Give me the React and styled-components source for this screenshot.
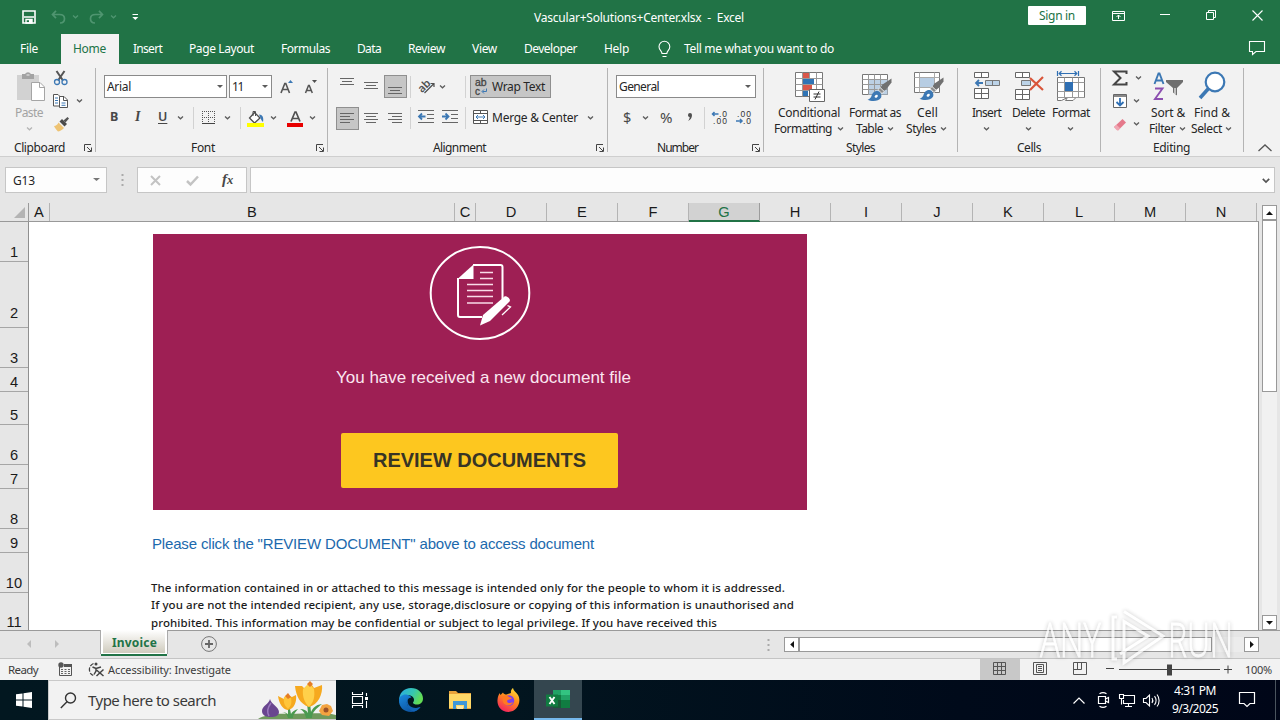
import React, { useLayoutEffect, useRef } from "react";
import styled, { createGlobalStyle, css } from "styled-components";

const UI = `"Noto Sans", "Open Sans", sans-serif`;
const ARIAL = `"Liberation Sans", Arial, sans-serif`;

const Global = createGlobalStyle`
  * { box-sizing: border-box; }
  body { margin: 0; font-family: ${UI}; font-size: 12px; color: #262626; overflow: hidden; }
  svg { display: block; flex: none; overflow: visible; }
`;

/* ---------- text ---------- */
const LabelText = styled.span`
  flex: none;
  display: block;
  width: ${(p) => p.$w}px;
  margin-left: ${(p) => p.$ml || 0}px;
  margin-top: ${(p) => p.$mt || 0}px;
  white-space: pre;
  font-family: ${(p) => p.$font || UI};
  font-size: ${(p) => p.$size || 12}px;
  font-weight: ${(p) => p.$weight || 400};
  line-height: ${(p) => p.$lh || 16}px;
  color: ${(p) => p.$color || "inherit"};
`;

/* Label tracks its letters so that the string fills the width it is given. */
function Label({ w, ml, mt, size, weight, color, font, lh, children }) {
  const ref = useRef(null);
  useLayoutEffect(() => {
    const el = ref.current;
    el.style.letterSpacing = "0px";
    const range = document.createRange();
    range.selectNodeContents(el);
    const natural = range.getBoundingClientRect().width;
    el.style.letterSpacing = (w - natural) / Math.max(1, el.textContent.length) + "px";
  }, [w, children]);
  return (
    <LabelText ref={ref} $w={w} $ml={ml} $mt={mt} $size={size} $weight={weight} $color={color} $font={font} $lh={lh}>
      {children}
    </LabelText>
  );
}

/* ---------- shared parts ---------- */
const Icon = styled.svg.attrs({ fill: "none" })`
  width: ${(p) => p.$w}px;
  height: ${(p) => p.$h}px;
  margin-left: ${(p) => p.$ml || 0}px;
  margin-top: ${(p) => p.$mt || 0}px;
`;
const Row = styled.div`
  display: flex;
  align-items: center;
  flex: none;
  height: ${(p) => p.$h}px;
  margin-top: ${(p) => p.$mt || 0}px;
`;
const Column = styled.div`
  display: flex;
  flex-direction: column;
  flex: none;
  width: ${(p) => p.$w}px;
  margin-left: ${(p) => p.$ml || 0}px;
`;
const Chev = ({ ml, mt, c = "#5c5c5c" }) => (
  <Icon $w={7} $h={4} $ml={ml} $mt={mt} viewBox="0 0 7 4">
    <path d="M1 .6 3.5 2.800 6 .6" stroke={c} strokeWidth="1.300" />
  </Icon>
);
const Divider = styled.div`
  flex: none;
  width: 1px;
  height: ${(p) => p.$h || 22}px;
  margin-left: ${(p) => p.$ml || 0}px;
  background: #d2d2d2;
`;

const Screen = styled.div`
  position: relative;
  width: 1280px;
  height: 720px;
  display: flex;
  flex-direction: column;
  overflow: hidden;
  background: #e6e6e6;
`;

/* ---------- title bar and tabs ---------- */
const TitleBar = styled.header`
  display: flex;
  align-items: center;
  height: 34px;
  flex: none;
  background: #217346;
  color: #fff;
`;
const SignIn = styled.button`
  width: 58px;
  height: 19px;
  margin: -3px 0 0 284px;
  padding: 0 0 0 11px;
  border: 0;
  border-radius: 1px;
  background: #fff;
  color: #217346;
  text-align: left;
`;
const TabBar = styled.nav`
  display: flex;
  align-items: center;
  height: 30px;
  flex: none;
  background: #217346;
  color: #fff;
`;
const ActiveTab = styled.div`
  display: flex;
  align-items: center;
  width: 58px;
  height: 30px;
  margin-left: 23px;
  padding-left: 12px;
  background: #f3f2f2;
  color: #217346;
`;

/* ---------- ribbon ---------- */
const Ribbon = styled.section`
  display: flex;
  height: 93px;
  flex: none;
  background: #f2f2f2;
  border-bottom: 1px solid #cfcfcf;
`;
const Group = styled.div`
  display: flex;
  flex-direction: column;
  width: ${(p) => p.$w}px;
  height: 92px;
  flex: none;
  background: linear-gradient(#b4b4b4, #b4b4b4) right 4px / 1px 84px no-repeat;
`;
const GroupBody = styled.div`
  display: flex;
  height: 76px;
  flex: none;
`;
const GroupFoot = styled.div`
  display: flex;
  align-items: center;
  height: 16px;
`;
const Stack = styled.div`
  display: flex;
  flex-direction: column;
`;
const Combo = styled.div`
  display: flex;
  align-items: center;
  flex: none;
  width: ${(p) => p.$w}px;
  height: 23px;
  margin-left: ${(p) => p.$ml}px;
  padding-left: 2px;
  border: 1px solid #8a8a8a;
  background: #fff;
`;
const Pressed = styled.div`
  display: flex;
  align-items: center;
  flex: none;
  width: ${(p) => p.$w}px;
  height: 23px;
  margin-left: ${(p) => p.$ml}px;
  padding-left: ${(p) => p.$pl || 3}px;
  border: 1px solid #8f8f8f;
  background: #c6c6c6;
`;
const Glyph = styled.span`
  flex: none;
  width: ${(p) => p.$w}px;
  margin-left: ${(p) => p.$ml}px;
  margin-top: ${(p) => p.$mt || 0}px;
  font-size: ${(p) => p.$size || 14}px;
  line-height: 18px;
  font-weight: ${(p) => p.$weight || 400};
  color: #484848;
  ${(p) => p.$italic && css`font-family: "Liberation Serif", serif; font-style: italic;`}
  ${(p) => p.$under && css`text-decoration: underline; text-underline-offset: 2px;`}
`;
const Arrow = ({ ml, mt, c = "#5c5c5c", w = 6 }) => (
  <Icon $w={w} $h={3} $ml={ml} $mt={mt} viewBox="0 0 6 3" preserveAspectRatio="none"><path d="M0 0H6L3 3Z" fill={c} /></Icon>
);
const Launcher = ({ ml }) => (
  <Icon $w={9} $h={9} $ml={ml} viewBox="0 0 9 9">
    <path d="M.5 7V.5H7M3 3l4 4M7.5 3.5v4h-4" stroke="#444" />
  </Icon>
);
const Lines = ({ ml, rows, mt }) => (
  <Icon $w={16} $h={16} $ml={ml} $mt={mt} viewBox="0 0 16 16">
    {rows.map(([y, a, b]) => <path key={y} d={`M${a} ${y + 0.5}H${b}`} stroke="#666" />)}
  </Icon>
);
const BigButton = styled.div`
  display: flex;
  flex-direction: column;
  flex: none;
  width: ${(p) => p.$w}px;
  margin-left: ${(p) => p.$ml || 0}px;
  padding-top: 6px;
`;
const IconBox = styled.div`
  height: 35px;
  flex: none;
`;
const Brush = () => (
  <>
    <path d="M30.500 7.500v4L25.500 18l-2.500 2-3.500-3.500 2-3Z" fill="#707070" />
    <path d="M19 16.500l4.300 4-2.300 2-4-3.800Z" fill="#8d8d8d" stroke="#f2f2f2" strokeWidth=".8" />
    <path d="M16.500 20c-3.500-.2-5.200 2.500-6 5-.6 1.800-2 3.200-4 3.800 4.500 2 11 1.700 13.500-2 1.300-2.300-.5-6.500-3.500-6.800Z" fill="#3c78b4" />
    <path d="M13.500 26c.5-2 2-2.800 3-2 .8.800.2 2.300-1.500 3Z" fill="#fff" />
  </>
);

function ClipboardGroup() {
  return (
    <Group $w={96}>
      <GroupBody>
        <BigButton $w={36} $ml={15}>
          <Icon $w={30} $h={33} $ml={1} viewBox="0 0 30 33">
            <path d="M1 5h22v25H1z" fill="#d2d2d2" />
            <path d="M6 4h3a3.500 3.500 0 0 1 6 0h3v5H6Z" fill="#a3a3a3" />
            <path d="M10.500 5h3" stroke="#eee" />
            <path d="M15.500 12.500H24L28.500 17v13.500h-13z" fill="#fff" stroke="#a5a5a5" />
            <path d="M23.500 12.500v5h5" stroke="#a5a5a5" />
          </Icon>
          <Label w={28} mt={2} color="#a3a3a3">Paste</Label>
          <Chev ml={11} mt={6} c="#b5b5b5" />
        </BigButton>
        <Column $w={40}>
          <Row $h={22} $mt={3}>
            <Icon $w={16} $h={16} $ml={2} viewBox="0 0 16 16">
              <path d="M3.500 1l6.500 9.500M11.500 1 5 10.500" stroke="#555" strokeWidth="2" />
              <circle cx="4" cy="12" r="2.500" stroke="#3c78b4" strokeWidth="1.300" />
              <circle cx="11.500" cy="12" r="2.500" stroke="#3c78b4" strokeWidth="1.300" />
            </Icon>
          </Row>
          <Row $h={24}>
            <Icon $w={16} $h={16} $ml={2} viewBox="0 0 16 16">
              <path d="M.5 1.500H5L7.500 4v9h-7z" fill="#fff" stroke="#555" />
              <path d="M6.500 3.500H11L14.500 7v7.500h-8z" fill="#fff" stroke="#555" />
              <path d="M10.500 3.500v4h4" stroke="#555" />
              <path d="M2 5h3M2 7.500h3M2 10h3M8.500 10h4M8.500 12.300h4" stroke="#3c78b4" />
            </Icon>
            <Chev ml={7} />
          </Row>
          <Row $h={22}>
            <Icon $w={17} $h={16} $ml={2} viewBox="0 0 17 16">
              <path d="M10.500 4.500 14.500 1 16 2.500l-3.500 4Z" fill="#555" />
              <path d="M6.500 5.500 9 3l5 5-2.500 2.500Z" fill="#4a4a4a" />
              <path d="M5.500 6.500 11 12c-2 2-4.500 3.500-6 3.500C3.500 14 1.500 11.500 1 10c2 0 3.500-1.500 4.500-3.500Z" fill="#eec373" />
            </Icon>
          </Row>
        </Column>
      </GroupBody>
      <GroupFoot><Label w={51} ml={14}>Clipboard</Label><Launcher ml={19} /></GroupFoot>
    </Group>
  );
}

function FontGroup() {
  return (
    <Group $w={232}>
      <GroupBody>
        <Stack>
          <Row $h={23} $mt={11}>
            <Combo $w={123} $ml={8}><Label w={24}>Arial</Label><Arrow ml={86} mt={-1} /></Combo>
            <Combo $w={43} $ml={2}><Label w={11}>11</Label><Arrow ml={19} mt={-1} /></Combo>
            <Icon $w={14} $h={16} $ml={8} viewBox="0 0 14 16">
              <path d="M1 14 4.800 4.500h1L9.500 14M2.500 10.500h5.500" stroke="#555" strokeWidth="1.600" />
              <path d="M8 4l2.500-3L13 4Z" fill="#3c78b4" />
            </Icon>
            <Icon $w={14} $h={16} $ml={10} viewBox="0 0 14 16">
              <path d="M1.500 14 4.500 6.500h.8L8.300 14M2.500 11.500h5" stroke="#555" strokeWidth="1.500" />
              <path d="M8 1h5l-2.500 3Z" fill="#505050" />
            </Icon>
          </Row>
          <Row $h={24} $mt={8}>
            <Glyph $w={9} $ml={14} $mt={-2} $weight={700} $size={12.5}>B</Glyph>
            <Glyph $w={8} $ml={16} $mt={-2} $size={14} $italic $weight={700}>I</Glyph>
            <Glyph $w={9} $ml={15} $mt={-2} $weight={600} $size={12.5} $under>U</Glyph>
            <Chev ml={10} />
            <Divider $ml={9} />
            <Icon $w={14} $h={14} $ml={8} viewBox="0 0 14 14">
              <path d="M.5 0v13M6.500 0v13M12.500 0v13M0 .5h13M0 6.500h13" stroke="#555" strokeDasharray="1 1" />
              <path d="M0 12.500h13" stroke="#444" />
            </Icon>
            <Chev ml={8} />
            <Divider $ml={9} />
            <Icon $w={18} $h={17} $ml={6} viewBox="0 0 18 17">
              <path d="M7.500 2.500 13 8l-5.500 5L2.500 8Z" fill="#fff" stroke="#505050" strokeWidth="1.300" />
              <path d="M6 6V1.500h2.500V6" stroke="#505050" />
              <path d="M12 4.500c3.500 0 5 3 4 7.500-1.500-1-2-3-2.500-4Z" fill="#3c78b4" />
              <path d="M0 13h17v4H0z" fill="#ffff00" />
            </Icon>
            <Chev ml={5} />
            <Icon $w={17} $h={17} $ml={10} viewBox="0 0 17 17">
              <path d="M4 11.500 8 2h1l4 9.500M5.500 8.500h6" stroke="#505050" strokeWidth="1.700" />
              <path d="M0 13h16v4H0z" fill="#e80000" />
            </Icon>
            <Chev ml={5} />
          </Row>
        </Stack>
      </GroupBody>
      <GroupFoot><Label w={24} ml={95}>Font</Label><Launcher ml={101} /></GroupFoot>
    </Group>
  );
}

function AlignmentGroup() {
  return (
    <Group $w={280}>
      <GroupBody>
        <Stack>
          <Row $h={23} $mt={11}>
            <Lines ml={12} rows={[[0, 0, 14], [3, 2, 12], [6, 0, 14]]} mt={-1} />
            <Lines ml={8} rows={[[3, 0, 14], [6, 2, 12], [9, 0, 14]]} mt={1} />
            <Pressed $w={23} $ml={4}><Lines ml={0} rows={[[9, 0, 14], [12, 2, 12], [15, 0, 14]]} mt={-2} /></Pressed>
            <Divider $ml={3} />
            <Icon $w={18} $h={17} $ml={7} viewBox="0 0 18 17">
              <text x="0" y="12" transform="rotate(-45 6 9)" fontSize="11" fontFamily="Noto Sans" fontWeight="600" fill="#505050">ab</text>
              <path d="M6.500 15 16 5.500M12.500 5.500H16V9" stroke="#505050" strokeWidth="1.200" />
            </Icon>
            <Chev ml={3} />
            <Divider $ml={19} />
            <Pressed $w={81} $ml={4} $pl={4}>
              <Icon $w={14} $h={18} viewBox="0 0 14 18">
                <text x="0" y="8" fontSize="10.500" fontFamily="Liberation Sans" fontWeight="400" stroke="#444" strokeWidth=".3" fill="#444">ab</text>
                <text x="0" y="16.500" fontSize="10" fontFamily="Liberation Sans" stroke="#444" strokeWidth=".3" fill="#444">c</text>
                <path d="M11.500 10.500v3H7.500M9 11.500 7 13.500l2 2" stroke="#3c78b4" />
              </Icon>
              <Label w={53} ml={3}>Wrap Text</Label>
            </Pressed>
          </Row>
          <Row $h={24} $mt={8}>
            <Pressed $w={23} $ml={8}><Lines ml={0} rows={[[3, 0, 14], [6, 0, 10], [9, 0, 14], [12, 0, 10]]} /></Pressed>
            <Lines ml={5} rows={[[3, 0, 14], [6, 2, 12], [9, 0, 14], [12, 2, 12]]} mt={-1} />
            <Lines ml={8} rows={[[3, 0, 14], [6, 4, 14], [9, 0, 14], [12, 4, 14]]} mt={-1} />
            <Divider $ml={6} />
            <Icon $w={16} $h={14} $ml={7} $mt={-2} viewBox="0 0 16 14">
              <path d="M0 .5h16M9 4.500h7M9 8.500h7M0 12.500h16" stroke="#666" />
              <path d="M7.500 6.500H1M4 3.500l-3 3 3 3" stroke="#3c78b4" strokeWidth="1.800" />
            </Icon>
            <Icon $w={16} $h={14} $ml={8} $mt={-2} viewBox="0 0 16 14">
              <path d="M0 .5h16M9 4.500h7M9 8.500h7M0 12.500h16" stroke="#666" />
              <path d="M0 6.500h6.500M3.500 3.500l3 3-3 3" stroke="#3c78b4" strokeWidth="1.800" />
            </Icon>
            <Divider $ml={7} />
            <Icon $w={16} $h={16} $ml={7} $mt={-2} viewBox="0 0 16 16">
              <path d="M.5 1.500h14v13H.5zM.5 4.500h14M.5 11.500h14M7.500 1.500v3M7.500 11.500v3" fill="#fff" stroke="#555" />
              <path d="M3 8h9M5 6 3 8l2 2M10 6l2 2-2 2" stroke="#3c78b4" />
            </Icon>
            <Label w={86} ml={3}>Merge &amp; Center</Label>
            <Chev ml={9} />
          </Row>
        </Stack>
      </GroupBody>
      <GroupFoot><Label w={53} ml={105}>Alignment</Label><Launcher ml={110} /></GroupFoot>
    </Group>
  );
}

const Decimals = ({ ml, flip }) => (
  <Icon $w={15} $h={15} $ml={ml} $mt={-2} viewBox="0 0 15 15">
    <text x={flip ? 1 : 7} y="6.500" fontSize="8.500" textLength={flip ? 14 : 8} fontFamily="Liberation Sans" fill="#333">{flip ? ".00" : ".0"}</text>
    <text x={flip ? 7 : 1} y="14" fontSize="8.500" textLength={flip ? 8 : 14} fontFamily="Liberation Sans" fill="#333">{flip ? ".0" : ".00"}</text>
    {flip
      ? <path d="M0 11h6M4 9l2 2-2 2" stroke="#3c78b4" strokeWidth="1.500" />
      : <path d="M6.500 4h-6M2.500 2l-2 2 2 2" stroke="#3c78b4" strokeWidth="1.500" />}
  </Icon>
);

function NumberGroup() {
  return (
    <Group $w={156}>
      <GroupBody>
        <Stack>
          <Row $h={23} $mt={11}>
            <Combo $w={140} $ml={8}><Label w={40}>General</Label><Arrow ml={86} mt={-1} /></Combo>
          </Row>
          <Row $h={24} $mt={8}>
            <Glyph $w={10} $ml={15} $mt={-3} $size={14.5}>$</Glyph>
            <Chev ml={9} />
            <Glyph $w={14} $ml={11} $mt={-2} $size={15}>%</Glyph>
            <Icon $w={6} $h={9} $ml={13} $mt={-2} viewBox="0 0 6 9"><path d="M1 2a2 2 0 1 1 4 0c0 3-1.500 5-4 6 1.200-1.500 1.800-3 1.600-4C1.500 4 1 3 1 2Z" fill="#505050" /></Icon>
            <Divider $ml={11} />
            <Decimals ml={7} />
            <Decimals ml={9} flip />
          </Row>
        </Stack>
      </GroupBody>
      <GroupFoot><Label w={41} ml={49}>Number</Label><Launcher ml={54} /></GroupFoot>
    </Group>
  );
}

function StylesGroup() {
  return (
    <Group $w={194}>
      <GroupBody>
        <BigButton $w={75} $ml={10}>
          <IconBox>
            <Icon $w={31} $h={32} $ml={21} viewBox="0 0 31 32">
              <path d="M.5 2.500h27v24H.5z" fill="#fff" stroke="#777" />
              <path d="M.5 8.500h27M.5 14.500h27M.5 20.500h27M7.500 2.500v24M14.500 2.500v24M21.500 2.500v24" stroke="#999" />
              <path d="M8 3h6v5H8zM8 15h9v5H8z" fill="#d9574a" />
              <path d="M8 9h11v5H8zM8 21h5v5H8z" fill="#2f74b5" />
              <path d="M14.500 19.500h15v12h-15z" fill="#fff" stroke="#666" />
              <path d="M18.500 24h7M18.500 27h7M24 21.500l-4 8" stroke="#333" />
            </Icon>
          </IconBox>
          <Label w={62} ml={4}>Conditional</Label>
          <Row $h={16}><Label w={58}>Formatting</Label><Chev ml={5} mt={-1} /></Row>
        </BigButton>
        <BigButton $w={52}>
          <IconBox>
            <Icon $w={32} $h={32} $ml={12} $mt={1} viewBox="0 0 32 32">
              <path d="M1.500 3.500h25v20h-25z" fill="#fff" stroke="#777" />
              <path d="M7 8.500h19.500v15H7z" fill="#bcd0e4" />
              <path d="M1.500 8.500h25M1.500 13.500h25M1.500 18.500h25M7.500 3.500v20M13.500 3.500v20M19.500 3.500v20" stroke="#999" />
              <Brush />
            </Icon>
          </IconBox>
          <Label w={52}>Format as</Label>
          <Row $h={16}><Label w={27} ml={7}>Table</Label><Chev ml={4} mt={-1} /></Row>
        </BigButton>
        <BigButton $w={50} $ml={5}>
          <IconBox>
            <Icon $w={32} $h={32} $ml={7} viewBox="0 0 32 32">
              <path d="M1.500 2.500h25v20h-25z" fill="#fff" stroke="#777" />
              <path d="M1.500 7.500h25M1.500 17.500h25M6.500 2.500v20M21.500 2.500v20" stroke="#aaa" />
              <path d="M7 8h14v9H7z" fill="#b7cde3" />
              <Brush />
            </Icon>
          </IconBox>
          <Label w={21} ml={11}>Cell</Label>
          <Row $h={16}><Label w={30}>Styles</Label><Chev ml={4} mt={-1} /></Row>
        </BigButton>
      </GroupBody>
      <GroupFoot><Label w={29} ml={82}>Styles</Label></GroupFoot>
    </Group>
  );
}

function CellsGroup() {
  return (
    <Group $w={143}>
      <GroupBody>
        <BigButton $w={40} $ml={14}>
          <IconBox>
            <Icon $w={28} $h={32} $ml={2} $mt={1} viewBox="0 0 28 32">
              <path d="M.5 1.500h14v5H.5zM7.500 1.500v5M.5 17.500h14v10H.5zM7.500 17.500v10M.5 22.500h14" fill="#fff" stroke="#666" />
              <path d="M11.500 9.500h14v5h-14zM18.500 9.500v5" fill="#bcd3e8" stroke="#777" />
              <path d="M9 12H2M5 9l-3 3 3 3" stroke="#3c78b4" strokeWidth="1.800" />
            </Icon>
          </IconBox>
          <Label w={29}>Insert</Label>
          <Chev ml={11} mt={6} />
        </BigButton>
        <BigButton $w={40}>
          <IconBox>
            <Icon $w={31} $h={32} $ml={2} $mt={1} viewBox="0 0 31 32">
              <path d="M1.500 1.500h14v5h-14zM8.500 1.500v5M1.500 18.500h14v10h-14zM8.500 18.500v10M1.500 23.500h14" fill="#fff" stroke="#666" />
              <path d="M7.500 9.500h9v5h-9z" fill="#bcd3e8" stroke="#777" />
              <path d="M16 7l13 12M29 6 16 19" stroke="#d9553a" strokeWidth="2.200" />
            </Icon>
          </IconBox>
          <Label w={33}>Delete</Label>
          <Chev ml={13} mt={6} />
        </BigButton>
        <BigButton $w={40}>
          <IconBox>
            <Icon $w={30} $h={32} $ml={4} viewBox="0 0 30 32">
              <path d="M1.500 7.500h27v20H20l-3 3h-6l-1.500 0 2-3-6 3h-4z" fill="#fff" stroke="#777" />
              <path d="M1.500 12.500h27M1.500 21.500h27M8.500 7.500v20M16.500 7.500v20M22.500 7.500v20M1.500 27.500h27" stroke="#999" />
              <path d="M9 12h8v9H9z" fill="#2f6fb3" />
              <path d="M1.500 1v5M22.500 1v5M3 3.500h18M5.500 1.300 3.200 3.500l2.300 2.200M18.500 1.300l2.300 2.200-2.300 2.200" stroke="#2f6fb3" strokeWidth="1.200" />
            </Icon>
          </IconBox>
          <Label w={38}>Format</Label>
          <Chev ml={15} mt={6} />
        </BigButton>
      </GroupBody>
      <GroupFoot><Label w={24} ml={59}>Cells</Label></GroupFoot>
    </Group>
  );
}

function EditingGroup() {
  return (
    <Group $w={143}>
      <GroupBody>
        <Column $w={48}>
          <Row $h={22} $mt={3}>
            <Icon $w={16} $h={16} $ml={11} viewBox="0 0 16 16">
              <path d="M14.500 4V1.500H2L8.500 8 2 14.500h12.500V12" stroke="#444" strokeWidth="2" />
            </Icon>
            <Chev ml={7} />
          </Row>
          <Row $h={24}>
            <Icon $w={15} $h={16} $ml={12} viewBox="0 0 15 16">
              <path d="M.5 1.500h13v13H.5z" fill="#fff" stroke="#666" />
              <path d="M1 2h12v2H1z" fill="#888" />
              <path d="M7 5v7.500M3.500 9 7 12.500 10.500 9" stroke="#2f6fb3" strokeWidth="1.800" />
            </Icon>
            <Chev ml={5} />
          </Row>
          <Row $h={22}>
            <Icon $w={15} $h={15} $ml={12} viewBox="0 0 15 15">
              <path d="M1 10 9.500 2 13 5.500 5 13.500Z" fill="#e5798b" />
              <path d="M1 10 3.500 7.700 7.200 11.300 5 13.500 3.500 13Z" fill="#f0a6b2" />
            </Icon>
            <Chev ml={5} />
          </Row>
        </Column>
        <BigButton $w={42}>
          <IconBox>
            <Icon $w={32} $h={31} $ml={4} $mt={1} viewBox="0 0 32 31">
              <path d="M1.500 13 5.500 2.500h1L10.500 13M3 9.500h6" stroke="#3c78b4" strokeWidth="1.900" />
              <path d="M2 17.500h7.500L2 28h8" stroke="#8c4fb0" strokeWidth="1.900" />
              <path d="M13 9h17v2l-6 6v7.500l-4-3V17l-7-6Z" fill="#6f6f6f" />
              <path d="M22 17v6" stroke="#ddd" strokeWidth="1.500" />
            </Icon>
          </IconBox>
          <Label w={34} ml={2}>Sort &amp;</Label>
          <Row $h={16}><Label w={26}>Filter</Label><Chev ml={4} mt={-1} /></Row>
        </BigButton>
        <BigButton $w={44}>
          <IconBox>
            <Icon $w={28} $h={30} $ml={7} $mt={1} viewBox="0 0 28 30">
              <path d="M10.500 17.500 2 27" stroke="#3c78b4" strokeWidth="3.600" />
              <circle cx="17" cy="11" r="9.300" fill="#fff" stroke="#3c78b4" strokeWidth="2.200" />
            </Icon>
          </IconBox>
          <Label w={36} ml={3}>Find &amp;</Label>
          <Row $h={16}><Label w={31}>Select</Label><Chev ml={3} mt={-1} /></Row>
        </BigButton>
      </GroupBody>
      <GroupFoot><Label w={37} ml={52}>Editing</Label></GroupFoot>
    </Group>
  );
}
const RibbonEnd = styled.div`
  display: flex;
  align-items: flex-end;
  padding: 0 0 4px 14px;
`;

/* ---------- formula bar ---------- */
const FormulaBar = styled.div`
  display: flex;
  height: 46px;
  flex: none;
  padding: 10px 0 0 5px;
`;
const Field = styled.div`
  display: flex;
  align-items: center;
  flex: none;
  width: ${(p) => p.$w}px;
  height: 26px;
  margin-left: ${(p) => p.$ml || 0}px;
  background: #fdfdfd;
  border: 1px solid #c6c6c6;
`;
const Dots = ({ ml }) => (
  <Icon $w={3} $h={12} $ml={ml} viewBox="0 0 3 12"><path d="M.5 0h2v2h-2zM.5 5h2v2h-2zM.5 10h2v2h-2z" fill="#aaa" /></Icon>
);
const Grip = styled.div`
  display: flex;
  align-items: center;
  height: 26px;
`;

/* ---------- sheet ---------- */
const SheetArea = styled.main`
  display: flex;
  height: 427px;
  flex: none;
`;
const Sheet = styled.div`
  width: 1259px;
  height: 427px;
  display: flex;
  flex-direction: column;
`;
const Heads = styled.div`
  display: flex;
  height: 19px;
  flex: none;
  border-bottom: 1px solid #999;
`;
const Head = styled.div`
  display: flex;
  align-items: flex-end;
  justify-content: center;
  flex: none;
  width: ${(p) => p.$w}px;
  height: 18px;
  font: 14.67px/17px ${ARIAL};
  color: ${(p) => (p.$on ? "#217346" : "#1a1a1a")};
  background: ${(p) => (p.$on ? "#d2d2d2" : "#e6e6e6")};
  border-right: 1px solid ${(p) => (p.$on ? "#9c9c9c" : "#b4b4b4")};
  box-shadow: ${(p) => (p.$on ? "inset 0 -1px 0 #217346, 0 1px 0 #217346" : "none")};
`;
const Corner = styled.div`
  display: flex;
  align-items: flex-end;
  justify-content: flex-end;
  flex: none;
  width: 29px;
  height: 18px;
  padding: 0 3px 3px 0;
  border-right: 1px solid #999;
`;
const Grid = styled.div`
  display: flex;
  height: 408px;
  overflow: hidden;
`;
const RowHeads = styled.div`
  width: 29px;
  flex: none;
  border-right: 1px solid #8f8f8f;
`;
const RowHead = styled.div`
  display: flex;
  align-items: flex-end;
  justify-content: center;
  height: ${(p) => p.$h}px;
  padding-bottom: ${(p) => p.$pb || 0}px;
  border-bottom: 1px solid #a6a6a6;
  font: 14.67px/17px ${ARIAL};
  color: #1a1a1a;
`;
const Cells = styled.div`
  width: 1230px;
  flex: none;
  background: #fff;
  border-right: 1px solid #8f8f8f;
  overflow: hidden;
`;
const Banner = styled.div`
  display: flex;
  flex-direction: column;
  align-items: flex-start;
  width: 654px;
  height: 276px;
  margin: 12px 0 0 124px;
  background: #9e1f54;
`;
const ReviewButton = styled.div`
  display: flex;
  align-items: center;
  width: 277px;
  height: 55px;
  margin: 44px 0 0 188px;
  padding: 0 0 1px 32px;
  border-radius: 2px;
  background: #fdc71f;
`;
const Note = styled.div`
  padding-left: 122px;
  margin-top: 25px;
`;
const VScroll = styled.div`
  display: flex;
  flex-direction: column;
  width: 21px;
  height: 427px;
  padding: 2px 3px 0;
`;
const ScrollButton = styled.div`
  display: flex;
  align-items: center;
  justify-content: center;
  flex: none;
  width: 15px;
  height: 15px;
  background: #fff;
  border: 1px solid #999;
`;
const VTrack = styled.div`
  height: 396px;
  background: #f1f1f1;
`;
const VThumb = styled.div`
  width: 15px;
  height: 172px;
  background: #fff;
  border: 1px solid #999;
`;

/* ---------- bottom bars ---------- */
const SheetTabs = styled.div`
  display: flex;
  align-items: center;
  height: 29px;
  flex: none;
  border-top: 1px solid #9a9a9a;
  border-bottom: 1px solid #c4c4c4;
`;
const SheetTab = styled.div`
  display: flex;
  align-items: center;
  align-self: flex-start;
  width: 66px;
  height: 24px;
  margin: -1px 0 0 41px;
  padding: 2px 0 0 9px;
  background: linear-gradient(#fff, #cfcbbd);
  border: solid #fff;
  border-width: 0 2px 1px;
  box-shadow: 0 2px 0 #217346, -1px 0 0 #aaa, 1px 0 0 #aaa;
`;
const HTrack = styled.div`
  width: 445px;
  height: 15px;
  background: #ececec;
`;
const HThumb = styled.div`
  width: 413px;
  height: 15px;
  background: #fff;
  border: 1px solid #999;
`;
const StatusBar = styled.div`
  display: flex;
  align-items: center;
  height: 21px;
  flex: none;
  background: #f2f2f2;
  color: #3c3c3c;
`;
const ViewButton = styled.div`
  display: flex;
  align-items: center;
  justify-content: center;
  width: 40px;
  height: 21px;
  margin-left: ${(p) => p.$ml || 0}px;
  padding-bottom: 2px;
  background: ${(p) => (p.$on ? "#c8c8c8" : "transparent")};
`;
const Taskbar = styled.footer`
  display: flex;
  align-items: center;
  height: 40px;
  flex: none;
  background: linear-gradient(90deg, #021720 0%, #02151f 40%, #000a1a 75%, #000618 100%);
  color: #fff;
`;
const SearchBox = styled.div`
  display: flex;
  align-items: center;
  width: 288px;
  height: 40px;
  margin-left: 16px;
  padding-left: 11px;
  background: #f2f2f2;
  border: 1px solid #c9c9c9;
  border-right: 0;
  color: #3a3a3a;
`;
const ActiveApp = styled.div`
  display: flex;
  align-items: center;
  justify-content: center;
  width: 48px;
  height: 40px;
  margin-left: 13px;
  background: #34464f;
  border-bottom: 2px solid #76b9ed;
`;
const Clock = styled.div`
  width: 46px;
  margin-left: 13px;
`;
const DesktopEdge = styled.div`
  width: 1px;
  height: 40px;
  margin-left: 19px;
  background: #4a545e;
`;

const Watermark = styled.div`
  position: absolute;
  left: 1040px;
  top: 606px;
  width: 200px;
  height: 66px;
  display: flex;
  align-items: center;
  opacity: 0.75;
  filter: drop-shadow(0 0 2px rgba(0, 0, 0, 0.3));
`;
const MarkWord = styled.span`
  flex: none;
  width: 64px;
  margin-left: ${(p) => p.$ml || 0}px;
  font: 300 47px/50px "Open Sans", sans-serif;
  color: #fff;
  -webkit-text-stroke: 0.8px #fff;
  transform: scaleX(${(p) => p.$sx});
  transform-origin: 0 50%;
`;

const columns = [["A", 21], ["B", 405], ["C", 21], ...[..."DEFGHIJKLMN"].map((c) => [c, 71])];
const rows = [[1, 40], [2, 66, 5], [3, 40], [4, 24], [5, 33], [6, 40], [7, 24], [8, 40], [9, 24], [10, 40], [11, 40, 1]];
const tabs = [["Insert", 29, 14], ["Page Layout", 65, 27], ["Formulas", 49, 27], ["Data", 24, 27], ["Review", 37, 27], ["View", 25, 27], ["Developer", 53, 27], ["Help", 25, 27]];

export default function App() {
  return (
    <Screen>
      <Global />
      <TitleBar>
        <Icon $w={14} $h={14} $ml={22} viewBox="0 0 14 14">
          <path d="M1 1h12v12H1z" stroke="#fff" strokeWidth="1.600" />
          <path d="M2 7h10M4 9.500h6V13H4z" stroke="#fff" strokeWidth="1.400" /><path d="M7 9.500h3V13H7z" fill="#fff" />
        </Icon>
        <Icon $w={15} $h={14} $ml={15} viewBox="0 0 15 14">
          <path d="M5 .8 1.500 4.500 5 8.200M1.500 4.500h7c3 0 5 1.700 5 4.200S12 13 9 13" stroke="#4f9570" strokeWidth="1.700" />
        </Icon>
        <Chev ml={6} c="#4f9570" />
        <Icon $w={15} $h={14} $ml={10} viewBox="0 0 15 14">
          <path d="M10 .8 13.500 4.500 10 8.200M13.500 4.500h-7c-3 0-5 1.700-5 4.200S3 13 6 13" stroke="#4f9570" strokeWidth="1.700" />
        </Icon>
        <Chev ml={6} c="#4f9570" />
        <Icon $w={7} $h={7} $ml={15} viewBox="0 0 7 7"><path d="M.5.500h5.500" stroke="#fff" /><path d="M.3 3h6L3.300 6Z" fill="#fff" /></Icon>
        <Label w={210} ml={395} mt={2}>{"Vascular+Solutions+Center.xlsx  -  Excel"}</Label>
        <SignIn><Label w={36}>Sign in</Label></SignIn>
        <Icon $w={14} $h={12} $ml={26} $mt={-3} viewBox="0 0 14 12">
          <path d="M.5 1.500h12v9H.5zM.5 3.500h12M6.500 9V5M4.500 7l2-2 2 2" stroke="#fff" />
        </Icon>
        <Icon $w={10} $h={2} $ml={34} $mt={-4} viewBox="0 0 10 2"><path d="M0 .5h10" stroke="#fff" /></Icon>
        <Icon $w={11} $h={11} $ml={36} $mt={-3} viewBox="0 0 11 11">
          <path d="M.5 2.500h7v7h-7zM2.500 2.500V.5h7v7h-2" stroke="#fff" />
        </Icon>
        <Icon $w={11} $h={11} $ml={35} $mt={-3} viewBox="0 0 11 11"><path d="M.5.5l10 10M10.500.5l-10 10" stroke="#fff" strokeWidth="1.100" /></Icon>
      </TitleBar>
      <TabBar>
        <Label w={18} ml={20}>File</Label>
        <ActiveTab><Label w={33}>Home</Label></ActiveTab>
        {tabs.map(([t, w, ml]) => <Label key={t} w={w} ml={ml}>{t}</Label>)}
        <Icon $w={13} $h={17} $ml={29} viewBox="0 0 13 17">
          <path d="M4 12.500c0-2.500-3-3.500-3-6.800a5.400 5.400 0 0 1 10.800 0c0 3.300-3 4.300-3 6.800zM4.500 15.500h4" stroke="#fff" strokeWidth="1.100" />
        </Icon>
        <Label w={150} ml={13}>Tell me what you want to do</Label>
        <Icon $w={17} $h={15} $ml={415} $mt={-2} viewBox="0 0 17 15">
          <path d="M.5.5h15v10H7l-3.500 3v-3h-3z" stroke="#fff" strokeWidth="1.100" />
        </Icon>
      </TabBar>
      <Ribbon>
        <ClipboardGroup />
        <FontGroup />
        <AlignmentGroup />
        <NumberGroup />
        <StylesGroup />
        <CellsGroup />
        <EditingGroup />
        <RibbonEnd>
          <Icon $w={14} $h={8} viewBox="0 0 14 8"><path d="M.5 7 7 1l6.500 6" stroke="#555" strokeWidth="1.300" /></Icon>
        </RibbonEnd>
      </Ribbon>
      <FormulaBar>
        <Field $w={102}><Label w={22} ml={7} mt={1}>G13</Label><Arrow ml={58} mt={-1} w={7} c="#777" /></Field>
        <Grip><Dots ml={14} /></Grip>
        <Field $w={110} $ml={13}>
          <Icon $w={11} $h={11} $ml={12} viewBox="0 0 11 11"><path d="M1 1l9 9M10 1 1 10" stroke="#c3c3c3" strokeWidth="2" /></Icon>
          <Icon $w={13} $h={11} $ml={25} viewBox="0 0 13 11"><path d="M1 6l3.500 3.500L12 1.500" stroke="#c3c3c3" strokeWidth="2.500" /></Icon>
          <Glyph $w={14} $ml={23} $mt={-2} $size={15} $weight={700} $italic>f<small>x</small></Glyph>
        </Field>
        <Field $w={1025} $ml={3}>
          <Icon $w={8} $h={5} $ml={1011} viewBox="0 0 8 5"><path d="M.8.8 4 4 7.200.8" stroke="#555" strokeWidth="1.700" /></Icon>
        </Field>
      </FormulaBar>
      <SheetArea>
        <Sheet>
          <Heads>
            <Corner><Icon $w={11} $h={11} viewBox="0 0 11 11"><path d="M11 0v11H0Z" fill="#b4b4b4" /></Icon></Corner>
            {columns.map(([c, w]) => <Head key={c} $w={w} $on={c === "G"}>{c}</Head>)}
          </Heads>
          <Grid>
            <RowHeads>{rows.map(([n, h, pb]) => <RowHead key={n} $h={h} $pb={pb}>{n}</RowHead>)}</RowHeads>
            <Cells>
              <Banner>
                <Icon $w={102} $h={96} $ml={276} $mt={11} viewBox="0 0 102 96">
                  <ellipse cx="51" cy="48" rx="49.300" ry="46" stroke="#fff" strokeWidth="2" />
                  <path d="M44 20h27.500a2 2 0 0 1 2 2v32M53 72H31a2 2 0 0 1-2-2V33" stroke="#fff" strokeWidth="2" />
                  <path d="M44.500 19.500V34H28.500Z" fill="#fff" />
                  <path d="M51 27.500h13M51 33.500h13M38 39.500h26M38 45.500h26M38 51.500h26M38 58h26" stroke="#f9dce8" strokeWidth="1.500" />
                  <path d="M51 80.500 54 70 75.500 51.500c1.500-1 7 2.500 5 5L61 76Z" fill="#fff" />
                  <path d="M78.500 60.500 81.500 62 73 70" stroke="#fff" strokeWidth="1.300" />
                </Icon>
                <Label w={295} ml={183} mt={26} size={17} lh={22} font={ARIAL} color="#fbe6f0">You have received a new document file</Label>
                <ReviewButton><Label w={213} size={20} lh={24} weight={700} font={ARIAL} color="#373425">REVIEW DOCUMENTS</Label></ReviewButton>
              </Banner>
              <Note>
                <Label w={442} ml={1} size={15} lh={18} font={ARIAL} color="#1b69ad">Please click the "REVIEW DOCUMENT" above to access document</Label>
                <Label w={634} mt={25.6} size={11.5} lh={17.6} weight={500} color="#1c1c1c">The information contained in or attached to this message is intended only for the people to whom it is addressed.</Label>
                <Label w={643} size={11.5} lh={17.6} weight={500} color="#1c1c1c">If you are not the intended recipient, any use, storage,disclosure or copying of this information is unauthorised and</Label>
                <Label w={566} size={11.5} lh={17.6} weight={500} color="#1c1c1c">prohibited. This information may be confidential or subject to legal privilege. If you have received this</Label>
              </Note>
            </Cells>
          </Grid>
        </Sheet>
        <VScroll>
          <ScrollButton><Icon $w={7} $h={4} viewBox="0 0 7 4"><path d="M0 4h7L3.500.2Z" fill="#111" /></Icon></ScrollButton>
          <VTrack><VThumb /></VTrack>
          <ScrollButton><Icon $w={7} $h={4} viewBox="0 0 7 4"><path d="M0 0h7L3.500 3.800Z" fill="#111" /></Icon></ScrollButton>
        </VScroll>
      </SheetArea>
      <SheetTabs>
        <Icon $w={5} $h={8} $ml={26} $mt={-2} viewBox="0 0 5 8"><path d="M5 0v8L1 4Z" fill="#bdbdbd" /></Icon>
        <Icon $w={5} $h={8} $ml={24} $mt={-2} viewBox="0 0 5 8"><path d="M0 0v8l4-4Z" fill="#bdbdbd" /></Icon>
        <SheetTab><Label w={45} weight={700} color="#217346">Invoice</Label></SheetTab>
        <Icon $w={16} $h={16} $ml={34} $mt={-1} viewBox="0 0 16 16">
          <circle cx="8" cy="8" r="7.400" stroke="#777" /><path d="M8 4v8M4 8h8" stroke="#666" strokeWidth="1.800" />
        </Icon>
        <Dots ml={550} />
        <Row $h={15}>
          <ScrollButton as={HLeft}><Icon $w={4} $h={7} viewBox="0 0 4 7"><path d="M4 0v7L.2 3.500Z" fill="#111" /></Icon></ScrollButton>
          <HTrack><HThumb /></HTrack>
          <ScrollButton><Icon $w={4} $h={7} viewBox="0 0 4 7"><path d="M0 0v7l3.800-3.500Z" fill="#111" /></Icon></ScrollButton>
        </Row>
      </SheetTabs>
      <StatusBar>
        <Label w={30} ml={8} size={11.5} mt={1}>Ready</Label>
        <Icon $w={15} $h={14} $ml={20} $mt={-2} viewBox="0 0 15 14">
          <path d="M1.500 5v8.500h12v-11H7" stroke="#555" /><path d="M6 2h8v3H6z" fill="#555" />
          <circle cx="3" cy="3" r="2.700" fill="#555" />
          <path d="M3 7.500h2M6.500 7.500h2M10 7.500h2M3 9.500h2M6.500 9.500h2M10 9.500h2M3 11.500h2M6.500 11.500h2M10 11.500h2" stroke="#666" />
        </Icon>
        <Icon $w={17} $h={15} $ml={15} viewBox="0 0 17 15">
          <path d="M5.500 1.500C2.500 3 1 5.500 1.500 8.500s2 4.500 4 5" stroke="#444" strokeWidth="1.300" strokeDasharray="4 1.500" />
          <circle cx="8" cy="2" r="1.500" fill="#444" />
          <path d="M4.500 5l3.500 1.500L13 5M8 6v3l-2 3.500M8.500 8l7 6M15.500 7.500l-7 6.500" stroke="#444" strokeWidth="1.500" />
        </Icon>
        <Label w={123} ml={3} size={11}>Accessibility: Investigate</Label>
        <ViewButton $on $ml={749}>
          <Icon $w={14} $h={13} viewBox="0 0 14 13"><path d="M.5.5h12v12H.5zM4.500.5v12M8.500.5v12M.5 4.500h12M.5 8.500h12" stroke="#555" /></Icon>
        </ViewButton>
        <ViewButton>
          <Icon $w={14} $h={13} viewBox="0 0 14 13"><path d="M.5.5h13v12H.5zM3.500 2.500h7v8h-7zM5 4.500h4M5 6.500h4M5 8.500h4" stroke="#555" /></Icon>
        </ViewButton>
        <ViewButton>
          <Icon $w={14} $h={13} viewBox="0 0 14 13"><path d="M.5.5h13v12H.5zM4.500.5v7M8.500.5v7M.5 7.500h8" stroke="#555" /></Icon>
        </ViewButton>
        <Icon $w={8} $h={1} $ml={6} $mt={-2} viewBox="0 0 8 1"><path d="M0 .5h8" stroke="#444" /></Icon>
        <Icon $w={101} $h={12} $ml={5} viewBox="0 0 101 12"><path d="M0 5.500h101" stroke="#444" /><path d="M48 .5h5v11h-5z" fill="#444" /></Icon>
        <Icon $w={8} $h={8} $ml={4} $mt={-1} viewBox="0 0 8 8"><path d="M0 4.500h8M4 .5v8" stroke="#444" /></Icon>
        <Label w={27} ml={13} size={11}>100%</Label>
      </StatusBar>
      <Taskbar>
        <Icon $w={16} $h={16} $ml={16} viewBox="0 0 16 16">
          <path d="M0 2.300 6.500 1.400v6.100H0zM7.500 1.200 16 0v7.500H7.500zM0 8.500h6.500v6.100L0 13.700zM7.500 8.500H16V16l-8.500-1.200z" fill="#fff" />
        </Icon>
        <SearchBox>
          <Icon $w={17} $h={17} viewBox="0 0 17 17"><circle cx="10.500" cy="6" r="5" stroke="#333" strokeWidth="1.400" /><path d="M7 9.700.8 16" stroke="#333" strokeWidth="1.400" /></Icon>
          <Label w={128} ml={11} size={15} lh={20}>Type here to search</Label>
          <Icon $w={80} $h={38} $ml={40} viewBox="0 0 80 38">
            <path d="M2 38c6-4 18-6 32-5 14 0 32-2 46 1v4Z" fill="#6f9a5c" />
            <path d="M44 28c2 1 5 3 6 9h6c0-6 4-9 10-14-7 1-9 4-11 8l-1-9h-3l1 10c-2-3-4-4-8-4ZM26 31c3 0 5 2 6 6h5c0-4 3-6 5-9-4 1-6 3-7 5l-1-5h-2v6c-1-2-3-3-6-3Z" fill="#4b9a50" />
            <path d="M14 18c1 5 9 8 9 13 0 4-4 5-8 5s-9-1-9-6 7-7 8-12Z" fill="#69458f" />
            <path d="M15 22c-3 4-5 8-2 13" stroke="#9a78bd" strokeWidth="1.500" />
            <path d="M22 15l6 3 3-4 5 2 4-2c1 7-2 14-8 15-6-1-9-7-10-14Z" fill="#f6a91f" />
            <path d="M28 16c-1 6 1 9 4 12 3-3 4-6 3-11l-4-3Z" fill="#ffc53a" />
            <path d="M39 5l7 0 3 3 5-7 4 6 8-3c1 9-4 20-13 22C44 23 40 15 39 5Z" fill="#f6a91f" />
            <path d="M47 8c-1 8 2 14 6 18 5-5 6-11 5-18l-5-6Z" fill="#ffd04a" />
            <path d="M51 3l3-3 3 3-3 3ZM29 15l3-3 3 4-3 2Z" fill="#e57d25" />
            <path d="M66 24l5-1 4 2 2 5-4 5-7-1-3-4Z" fill="#f2a340" /><circle cx="70" cy="29" r="2.500" fill="#9a5228" />
          </Icon>
        </SearchBox>
        <Icon $w={17} $h={16} $ml={16} viewBox="0 0 17 16">
          <path d="M.5 0v2.500h10V0M.5 16v-2.500h10V16M.5 4.500h10v7H.5zM14.500 1v3M14.500 9v7" stroke="#fff" strokeWidth="1.100" />
          <path d="M13 5h3v3h-3z" fill="#fff" />
        </Icon>
        <Icon $w={24} $h={24} $ml={30} viewBox="0 0 24 24">
          <defs>
            <linearGradient id="e1" x1="0" y1="0" x2="1" y2=".4"><stop offset="0" stopColor="#28a9e8" /><stop offset=".6" stopColor="#36c6b0" /><stop offset="1" stopColor="#62dc55" /></linearGradient>
            <linearGradient id="e2" x1="0" y1="0" x2=".7" y2="1"><stop offset="0" stopColor="#1b8be0" /><stop offset="1" stopColor="#0b4f9c" /></linearGradient>
          </defs>
          <path d="M0 13C0 5 5 0 12 0s12 5 12 10.500c0 4-3 6-6 6-2 0-4-.7-4-1.800 0-.7 1-1.200 1-3 0-2.500-2.500-4.500-6-4.500C4 7.200 0 10 0 13Z" fill="url(#e1)" />
          <path d="M0 12c.5-4 4.500-6.500 9-5 1.500.5 3 1.500 3.500 2.500-3 0-5 3-4.500 6 .7 4 5 6.500 13.500 3.500C19.500 22 16 24 12 24 5 24-.5 19 0 12Z" fill="url(#e2)" />
          <path d="M9 10c-3 5 0 12 6 13.500 3-.7 5-2.300 6.500-4.500C15 21.500 7 19 9 10Z" fill="#1264b5" />
        </Icon>
        <Icon $w={22} $h={20} $ml={26} viewBox="0 0 22 20">
          <path d="M0 1h7l2 2h13v16H0z" fill="#e9a33b" /><path d="M0 4h22v14H0z" fill="#ffd867" />
          <path d="M4 11h14v8h-3v-4H7v4H4z" fill="#3f97d8" /><path d="M8 16h6v3H8z" fill="#ffe9a8" />
        </Icon>
        <Icon $w={24} $h={24} $ml={26} viewBox="0 0 24 24">
          <defs><linearGradient id="ff" x1=".8" y1="0" x2=".3" y2="1"><stop offset="0" stopColor="#ffe03a" /><stop offset=".45" stopColor="#ff8a1c" /><stop offset="1" stopColor="#f5225f" /></linearGradient></defs>
          <path d="M3 5c0 1 .2 1.500.5 2L6 4.500C6.500 6 8 6.500 9.500 6.500L14 5c-.5-2 .5-4 2-5 .5 3 3 4 5 7 4 7-1 17-9.500 17C4 24 0 18 .5 12 .7 9 1.500 6.500 3 5Z" fill="url(#ff)" />
          <circle cx="12" cy="12.500" r="5.200" fill="#7a3ff0" />
          <path d="M5 9c2-2 5-2 7 0l3 1c-1 2-4 1-5 3 0 2 3 3 6 1-1 4-8 5-10 0Z" fill="#ff7a22" />
        </Icon>
        <ActiveApp>
          <Icon $w={24} $h={20} $mt={2} viewBox="0 0 24 20">
            <path d="M7 0h8v5H7z" fill="#21a366" /><path d="M15 0h9v5h-9z" fill="#33c481" />
            <path d="M7 5h8v5H7z" fill="#107c41" /><path d="M15 5h9v5h-9z" fill="#21a366" />
            <path d="M7 10h8v8H7z" fill="#185c37" /><path d="M15 10h9v8h-9z" fill="#107c41" />
            <path d="M0 4.500h12v12H0z" fill="#107c41" />
            <path d="M3.500 7l5 7M8.500 7l-5 7" stroke="#fff" strokeWidth="1.900" />
          </Icon>
        </ActiveApp>
        <Icon $w={12} $h={7} $ml={491} viewBox="0 0 12 7"><path d="M.5 6.500 6 1l5.500 5.500" stroke="#fff" strokeWidth="1.200" /></Icon>
        <Icon $w={13} $h={16} $ml={12} viewBox="0 0 13 16">
          <path d="M1.500 4.500h7v7h-7zM8.500 7l3-1.500v5L8.500 9M2.500 1.800c2-1.300 5-1.300 7 0M2.500 14.200c2 1.300 5 1.300 7 0" stroke="#fff" strokeWidth="1.200" />
        </Icon>
        <Icon $w={17} $h={15} $ml={9} viewBox="0 0 17 15">
          <path d="M5 2.500h10.500v8H4.500V7M9.500 10.500v3M6 13.500h7M.5 1.500h4v4h-4zM2.500 5.500v6" stroke="#fff" strokeWidth="1.100" />
        </Icon>
        <Icon $w={17} $h={15} $ml={7} viewBox="0 0 17 15">
          <path d="M.5 5.500H3L6.500 2v11L3 9.500H.5zM9 5c1 1.500 1 3.500 0 5M11.500 3.200c2 2.600 2 6 0 8.600M14 1.500c2.800 3.500 2.800 8.500 0 12" stroke="#fff" strokeWidth="1.100" />
        </Icon>
        <Clock>
          <Label w={42} ml={1} lh={18}>4:31 PM</Label>
          <Label w={46} ml={-1} lh={18}>9/3/2025</Label>
        </Clock>
        <Icon $w={17} $h={16} $ml={20} viewBox="0 0 17 16"><path d="M.5.5h15v11H11l-3 3-3-3H.5z" stroke="#fff" strokeWidth="1.200" /></Icon>
        <DesktopEdge />
      </Taskbar>
      <Watermark>
        <MarkWord $sx={0.7}>ANY</MarkWord>
        <Icon $w={56} $h={64} $ml={4} viewBox="0 0 56 64">
          <path d="M16 4.500 55 29 16 56V14.500L40 29 12 47" stroke="#fff" strokeWidth="3" />
          <path d="M9 10H5v42h4" stroke="#fff" strokeWidth="3" />
        </Icon>
        <MarkWord $ml={4} $sx={0.68}>RUN</MarkWord>
      </Watermark>
    </Screen>
  );
}

const HLeft = styled.div`
  margin-left: 14px;
`;
